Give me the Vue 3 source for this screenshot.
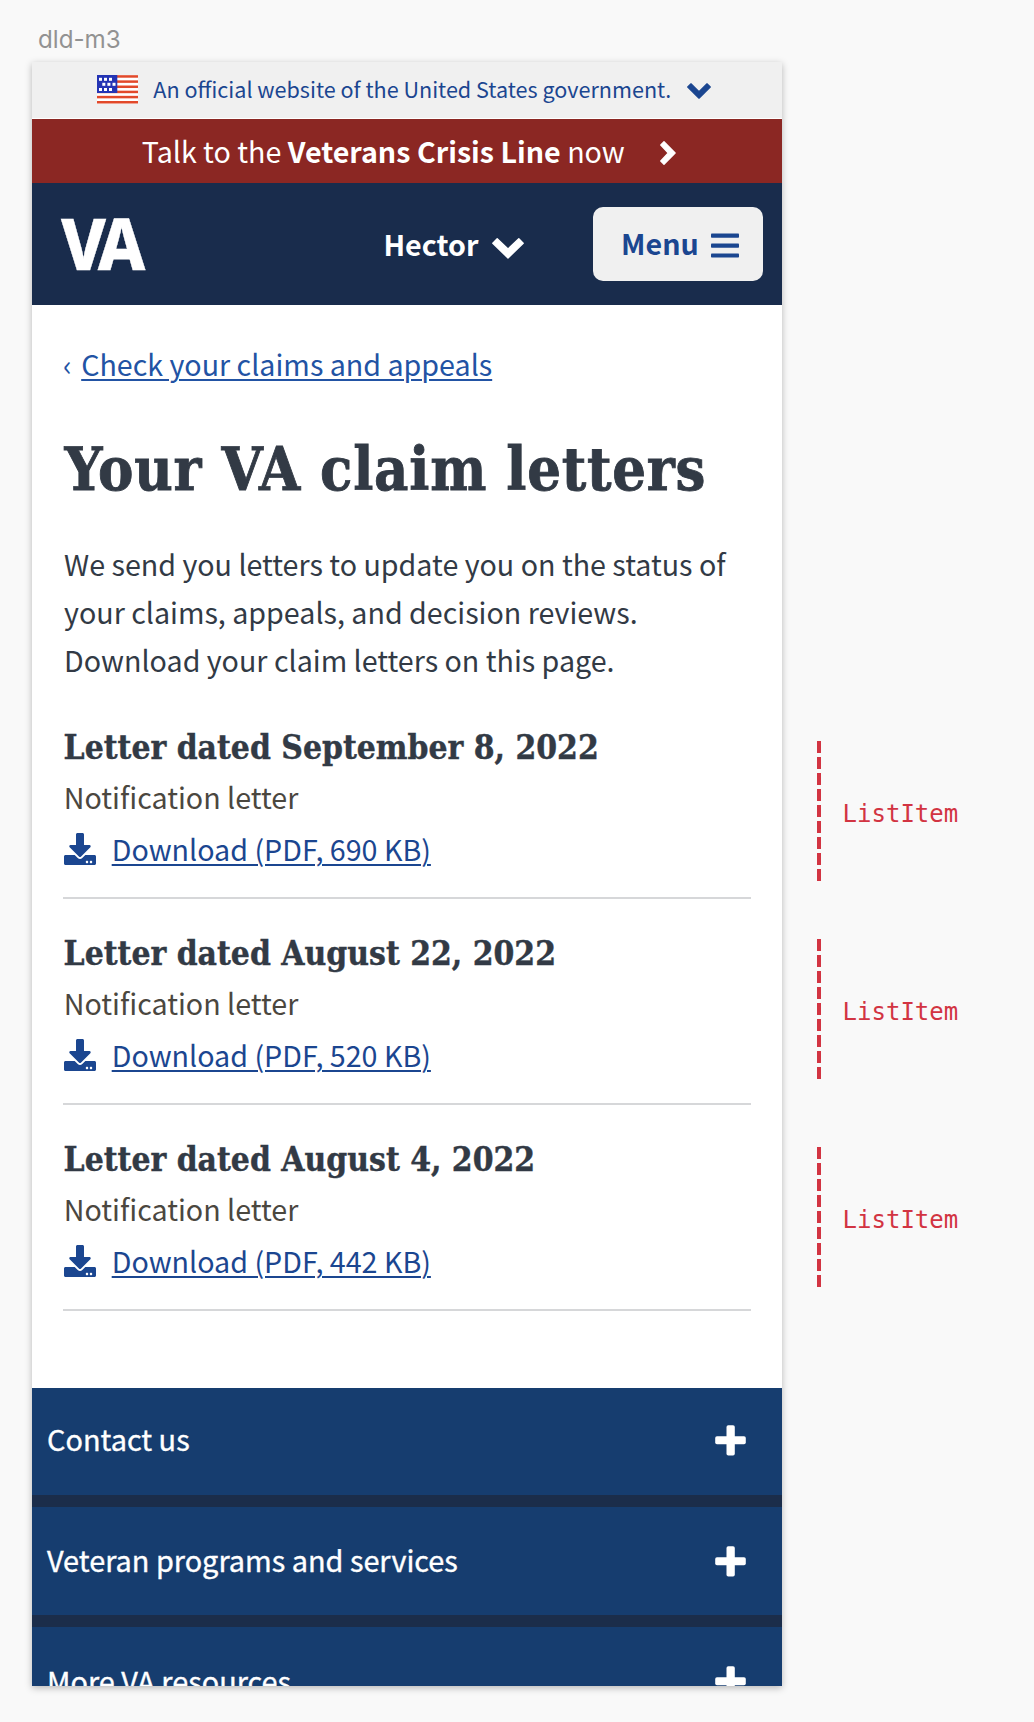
<script setup>
const letters = [
  { date: 'September 8, 2022', size: '690 KB' },
  { date: 'August 22, 2022', size: '520 KB' },
  { date: 'August 4, 2022', size: '442 KB' }
]
const sections = ['Contact us', 'Veteran programs and services', 'More VA resources']
const starRows = [
  { y: 2.8, xs: [2, 7, 12] },
  { y: 7.8, xs: [5.3, 10.4, 15.5] },
  { y: 13, xs: [2, 7, 12] }
]
</script>

<template>
  <div class="canvas">
    <div class="board">
      <div class="frame-name">dld-m3</div>
      <div class="phone">
        <div class="gov">
          <svg class="flag" viewBox="0 0 41 29" width="41" height="29">
            <rect width="41" height="29" fill="#fff" />
            <rect v-for="n in 6" :key="n" x="0" :y="(n - 1) * 5.16 + 0.2" width="41" height="2.5" fill="#e2492a" />
            <rect width="20.3" height="18" fill="#2434b4" />
            <template v-for="row in starRows" :key="row.y">
              <rect v-for="x in row.xs" :key="x" :x="x" :y="row.y" width="3" height="3" fill="#fff" />
            </template>
          </svg>
          <span class="gov-text">An official website of the United States government.</span>
          <svg class="gov-chevron" viewBox="0 0 24 16" width="24" height="16">
            <path d="M.7 4 4 .8 12 8.6 20 .8 23.3 4 12 15.2Z" />
          </svg>
        </div>

        <div class="crisis">
          <span class="crisis-text">Talk to the <b>Veterans Crisis Line</b> now</span>
          <svg viewBox="0 0 16 24" width="16" height="24">
            <path d="M4 .8 15.1 12 4 23.2.8 20 8.3 12 .8 4Z" />
          </svg>
        </div>

        <header class="header">
          <div class="logo">VA</div>
          <div class="user">
            <span>Hector</span>
            <svg viewBox="0 0 32 21" width="32" height="21">
              <path d="M.8 5.2 5.2.8 16 11 26.8.8 31.2 5.2 16 20Z" />
            </svg>
          </div>
          <button class="menu">
            <span>Menu</span>
            <svg viewBox="0 0 28 25" width="28" height="25">
              <rect y=".5" width="28" height="4.2" rx=".8" />
              <rect y="10.500" width="28" height="4.2" rx=".8" />
              <rect y="20.400" width="28" height="4.2" rx=".8" />
            </svg>
          </button>
        </header>

        <main class="main">
          <nav class="crumb"><span class="crumb-mark">‹</span><a>Check your claims and appeals</a></nav>
          <h1>Your VA claim letters</h1>
          <p class="intro">
            We send you letters to update you on the status of<br />your claims, appeals, and decision reviews.<br />Download your claim letters on this page.
          </p>
          <ul class="letters">
            <li v-for="l in letters" :key="l.date">
              <h2>Letter dated {{ l.date }}</h2>
              <div class="kind">Notification letter</div>
              <div class="download">
                <svg viewBox="0 0 512 512" width="32" height="32">
                  <path d="M216 0h80c13.300 0 24 10.700 24 24v168h87.700c17.800 0 26.700 21.500 14.100 34.100L269.700 378.300c-7.500 7.500-19.800 7.500-27.300 0L90.100 226.100c-12.600-12.600-3.700-34.100 14.100-34.100H192V24c0-13.300 10.700-24 24-24zm296 376v112c0 13.300-10.700 24-24 24H24c-13.300 0-24-10.700-24-24V376c0-13.300 10.700-24 24-24h146.700l49 49c20.100 20.100 52.500 20.100 72.600 0l49-49H488c13.300 0 24 10.700 24 24zm-124 88c0-11-9-20-20-20s-20 9-20 20 9 20 20 20 20-9 20-20zm64 0c0-11-9-20-20-20s-20 9-20 20 9 20 20 20 20-9 20-20z" />
                </svg>
                <a>Download (PDF, {{ l.size }})</a>
              </div>
            </li>
          </ul>
        </main>

        <footer class="footer">
          <div v-for="s in sections" :key="s" class="section">
            <span>{{ s }}</span>
            <svg viewBox="0 0 31 31" width="31" height="31">
              <rect x="11.500" y=".3" width="8.300" height="30.200" rx="1.800" />
              <rect x=".2" y="11.300" width="30.600" height="8" rx="1.800" />
            </svg>
          </div>
        </footer>
      </div>
    </div>

    <aside class="notes">
      <div v-for="l in letters" :key="l.date" class="note">
        <i class="dashes"></i><span>ListItem</span>
      </div>
    </aside>
  </div>
</template>

<style>
body { background: #f9f9f9; }
</style>

<style scoped>
.canvas {
  display: flex;
  height: 1722px;
  overflow: hidden;
  background: #f9f9f9;
  font-family: "Noto Sans CJK SC", "Noto Sans", sans-serif;
  font-size: 28.65px;
  color: #323a45;
}
svg { display: block; flex: none; }
.board { width: 750px; padding-left: 32px; flex: none; }
.frame-name {
  height: 62px;
  padding-left: 6px;
  box-sizing: border-box;
  font: 24.2px/80px Inter, sans-serif;
  color: #929292;
}
.phone {
  height: 1624px;
  overflow: hidden;
  background: #fff;
  box-shadow: 0 2px 7px rgba(0, 0, 0, .27);
}
.gov {
  display: flex;
  height: 56px;
  padding: 0 0 0 65px;
  border-bottom: 1px solid #fff;
  background: #f0f0f0;
  color: #1b4690;
  font-size: 21.58px;
  line-height: 53px;
  white-space: nowrap;
}
.flag { margin: 13px 15.3px 0 0; }
.gov-chevron { margin: 21px 0 0 16px; }
.gov-chevron path { fill: #1b4690; stroke: #1b4690; stroke-width: 1.2; stroke-linejoin: round; }
.crisis {
  display: flex;
  gap: 35px;
  height: 64px;
  padding-left: 109.8px;
  background: #8b2723;
  color: #fff;
  line-height: 64px;
  white-space: nowrap;
}
.crisis svg { margin-top: 22px; }
.crisis-text { white-space: pre; }
.crisis path, .user path { fill: #fff; stroke: #fff; stroke-width: 1.4; stroke-linejoin: round; }
.header {
  display: flex;
  align-items: center;
  height: 122px;
  padding: 0 19.3px 0 28.8px;
  box-sizing: border-box;
  background: #192c4c;
  color: #fff;
  font-weight: 700;
}
.logo {
  width: 84.2px;
  font: 800 71.5px/120px "Noto Sans", sans-serif;
  height: 122px;
  letter-spacing: -8.7px;
  font-kerning: none;
  transform: scaleX(.94);
  transform-origin: left;
  -webkit-text-stroke: .4px #fff;
}
.user {
  display: flex;
  align-items: center;
  gap: 13.7px;
  margin-left: 238.4px;
  line-height: 40px;
}
.user svg { margin-top: 8px; }
.menu {
  display: flex;
  align-items: center;
  gap: 12px;
  width: 170px;
  height: 74px;
  margin-left: auto;
  padding: 0 0 0 28.4px;
  border: 0;
  border-radius: 10px;
  background: #f0f0f0;
  color: #1b4690;
  font: inherit;
  line-height: 40px;
}
.menu span { margin-top: -3px; }
.menu svg { fill: #1b4690; margin-top: 3px; }
.main { padding: 35px 31px 77px; }
.crumb { display: flex; height: 48px; line-height: 48px; color: #2253a4; }
.crumb-mark { width: 18.2px; }
a { text-decoration: underline; text-decoration-thickness: 2px; text-underline-offset: 3px; }
h1 {
  margin: 47px 0 35px;
  padding-left: 1.6px;
  font: 700 59px/70px "DejaVu Serif Condensed", "DejaVu Serif", serif;
  letter-spacing: .75px;
  white-space: nowrap;
  -webkit-text-stroke: .8px #323a45;
}
.intro { margin: 0 0 9.4px; padding-left: 1.1px; line-height: 48.2px; white-space: nowrap; }
.letters { margin: 0; padding: 0; list-style: none; }
.letters li { padding: 34px 0 28px; border-bottom: 2px solid #d6d7d9; }
.letters li + li { padding-top: 35px; }
h2 {
  margin: 0;
  padding-left: .6px;
  font: 700 33.3px/40px "DejaVu Serif Condensed", "DejaVu Serif", serif;
  -webkit-text-stroke: .4px #323a45;
}
.kind { margin-top: 9px; padding-left: .8px; line-height: 40px; color: #4b473f; }
.download {
  display: flex;
  gap: 15.7px;
  margin-top: 12px;
  padding-left: 1px;
  line-height: 40px;
  color: #1b4690;
}
.download svg { margin-top: 4px; fill: #1b4690; }
.footer { background: #1b2d4a; }
.section {
  display: flex;
  justify-content: space-between;
  height: 108px;
  margin-bottom: 12px;
  padding: 0 36.5px 0 15px;
  background: #163d6f;
  color: #fff;
  font-size: 28.85px;
  line-height: 101px;
  -webkit-text-stroke: .35px #fff;
}
.section:first-child { height: 107px; }
.section svg { margin-top: 37px; fill: #fff; }
.section:not(:first-child) svg { margin-top: 39px; }
.section:not(:first-child) { line-height: 105px; }
.section:last-child { line-height: 107px; }
.notes { padding: 741px 0 0 35px; color: #d23442; }
.note { display: flex; align-items: center; height: 140px; margin-bottom: 58px; font: 24px/30px "DejaVu Sans Mono", monospace; }
.note:nth-child(2) { margin-bottom: 68px; }
.note span { padding-top: 6px; }
.dashes {
  width: 4px;
  height: 140px;
  margin-right: 21.6px;
  background: repeating-linear-gradient(#d23442 0 12px, transparent 12px 16px);
}
</style>
